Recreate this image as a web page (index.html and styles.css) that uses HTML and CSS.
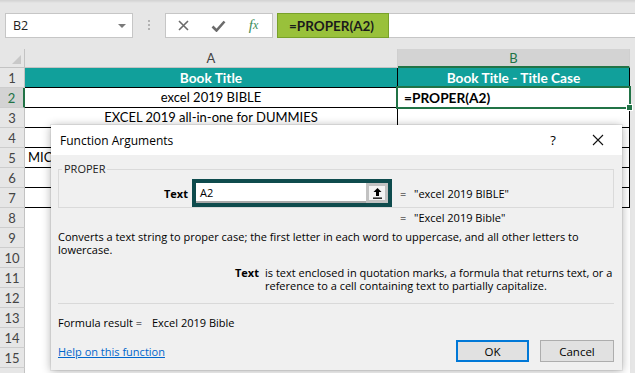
FILE: index.html
```html
<!DOCTYPE html>
<html>
<head>
<meta charset="utf-8">
<link rel="stylesheet" href="styles.css">
</head>
<body>
<div class="toolbar">
  <div class="namebox"><span>B2</span><span class="caret"></span></div>
  <div class="dots"><i></i><i></i><i></i></div>
  <div class="fbtns">
    <span class="fb"><svg width="11" height="11" viewBox="0 0 11 11"><path d="M1 1L10 10M10 1L1 10" stroke="#6b6b6b" stroke-width="1.6" fill="none"/></svg></span>
    <span class="fb"><svg width="15" height="12" viewBox="0 0 15 12"><path d="M1.5 6.5L5.5 10.5L13.5 1.5" stroke="#6b6b6b" stroke-width="2.6" fill="none"/></svg></span>
    <span class="fb fx">f<span class="fxx">x</span></span>
  </div>
  <div class="formula"><div class="fgreen">=PROPER(A2)</div></div>
</div>

<div class="sheet">
  <div class="corner"><span class="tri"></span></div>
  <div class="colh">A</div>
  <div class="colh sel">B</div>

  <div class="rowh">1</div>
  <div class="cell t hdr">Book Title</div>
  <div class="cell t hdr">Book Title - Title Case</div>

  <div class="rowh sel">2</div>
  <div class="cell t c">excel 2019 BIBLE</div>
  <div class="cell t active">=PROPER(A2)</div>

  <div class="rowh">3</div>
  <div class="cell t c">EXCEL 2019 all-in-one for DUMMIES</div>
  <div class="cell t"></div>

  <div class="rowh">4</div>
  <div class="cell t"></div>
  <div class="cell t"></div>

  <div class="rowh">5</div>
  <div class="cell t"><span class="clip">MICROSOFT EXCEL 2019</span></div>
  <div class="cell t"></div>

  <div class="rowh">6</div>
  <div class="cell t"></div>
  <div class="cell t"></div>

  <div class="rowh">7</div>
  <div class="cell t"></div>
  <div class="cell t"></div>

  <div class="rowh">8</div><div class="cell"></div><div class="cell"></div>
  <div class="rowh">9</div><div class="cell"></div><div class="cell"></div>
  <div class="rowh">10</div><div class="cell"></div><div class="cell"></div>
  <div class="rowh">11</div><div class="cell"></div><div class="cell"></div>
  <div class="rowh">12</div><div class="cell"></div><div class="cell"></div>
  <div class="rowh">13</div><div class="cell"></div><div class="cell"></div>
  <div class="rowh">14</div><div class="cell"></div><div class="cell"></div>
  <div class="rowh">15</div><div class="cell"></div><div class="cell"></div>
  <div class="rowh"></div><div class="cell"></div><div class="cell"></div>
</div>

<div class="dialog">
  <div class="dtitle">
    <span class="dname">Function Arguments</span>
    <span class="dq">?</span>
    <span class="dclose"><svg width="12" height="12" viewBox="0 0 12 12"><path d="M1 1L11 11M11 1L1 11" stroke="#111" stroke-width="1.1" fill="none"/></svg></span>
  </div>
  <div class="dbody">
    <fieldset class="group">
      <legend>PROPER</legend>
      <div class="argrow">
        <span class="arglabel">Text</span>
        <div class="refbox">
          <div class="inp">A2</div>
          <div class="refbtn"><svg width="11" height="12" viewBox="0 0 11 12"><path d="M5.5 1L1.5 5H4V9H7V5H9.5Z" fill="#000"/><rect x="1" y="10.5" width="9" height="1.3" fill="#000"/></svg></div>
        </div>
        <span class="eq">=</span>
        <span class="val">"excel 2019 BIBLE"</span>
      </div>
    </fieldset>
    <div class="resrow"><span class="eq">=</span><span class="val">"Excel 2019 Bible"</span></div>
    <div class="desc">Converts a text string to proper case; the first letter in each word to uppercase, and all other letters to<br>lowercase.</div>
    <div class="argdesc">
      <span class="argname">Text</span>
      <span class="argtext">is text enclosed in quotation marks, a formula that returns text, or a<br>reference to a cell containing text to partially capitalize.</span>
    </div>
    <div class="sep"></div>
    <div class="fres">Formula result =<span class="fresval">Excel 2019 Bible</span></div>
    <div class="footer">
      <a class="help" href="#">Help on this function</a>
      <button class="btn ok">OK</button>
      <button class="btn cancel">Cancel</button>
    </div>
  </div>
</div>
</body>
</html>
```

FILE: styles.css
```css
html, body {
  margin: 0;
  padding: 0;
}
body {
  width: 635px;
  height: 373px;
  overflow: hidden;
  background: #e6e6e6;
  font-family: "Open Sans", "Noto Sans", sans-serif;
  position: relative;
}

/* ---------- toolbar ---------- */
.toolbar {
  height: 49px;
  box-sizing: border-box;
  padding-top: 13px;
  display: flex;
  align-items: flex-start;
  background: linear-gradient(#d2d2d2 0, #dedede 2px, #e6e6e6 3px);
}
.namebox {
  margin-left: 5px;
  width: 128px;
  height: 25px;
  box-sizing: border-box;
  border: 1px solid #c6c6c6;
  background: #fff;
  display: flex;
  align-items: center;
  padding-left: 7px;
  font-size: 12.5px;
  color: #222;
}
.caret {
  margin-left: auto;
  margin-right: 6px;
  width: 0;
  height: 0;
  border-left: 4px solid transparent;
  border-right: 4px solid transparent;
  border-top: 4px solid #7a7a7a;
}
.dots {
  width: 32px;
  display: flex;
  flex-direction: column;
  align-items: center;
  gap: 2px;
  padding-top: 7px;
}
.dots i {
  display: block;
  width: 2px;
  height: 2px;
  background: #b2b2b2;
}
.fbtns {
  width: 108px;
  height: 25px;
  box-sizing: border-box;
  border: 1px solid #c6c6c6;
  background: #fff;
  display: flex;
  align-items: center;
}
.fb {
  width: 35px;
  display: flex;
  justify-content: center;
  align-items: center;
}
.fx {
  font-family: "Liberation Serif", serif;
  font-style: italic;
  color: #3c8d5a;
  font-size: 15px;
}
.fxx {
  font-size: 12px;
}
.formula {
  flex: 1;
  margin-left: 4px;
  height: 25px;
  box-sizing: border-box;
  border-top: 1px solid #c6c6c6;
  border-bottom: 1px solid #c6c6c6;
  background: #fff;
  display: flex;
}
.fgreen {
  width: 112px;
  margin: -1px 0;
  box-sizing: border-box;
  background: #99c13b;
  border: 1px solid #78a12a;
  display: flex;
  align-items: center;
  padding-left: 11px;
  font-family: "Lato", sans-serif;
  font-weight: bold;
  font-size: 13.5px;
  color: #1b1b1b;
}

/* ---------- sheet ---------- */
.sheet {
  display: grid;
  grid-template-columns: 25px 373px 232px;
  grid-template-rows: 19px;
  grid-auto-rows: 20px;
  font-family: "Lato", sans-serif;
  font-size: 13px;
}
.corner {
  background: #e6e6e6;
  border-right: 1px solid #c3c3c3;
  border-bottom: 1px solid #c3c3c3;
  box-sizing: border-box;
  position: relative;
}
.tri {
  position: absolute;
  right: 3px;
  bottom: 3px;
  width: 0;
  height: 0;
  border-left: 9px solid transparent;
  border-bottom: 9px solid #c8c8c8;
}
.colh {
  background: #e6e6e6;
  box-sizing: border-box;
  border-right: 1px solid #cfcfcf;
  border-bottom: 1px solid #c3c3c3;
  text-align: center;
  font-size: 13px;
  line-height: 19px;
  color: #444;
}
.colh.sel {
  background: #d3d3d3;
  border-bottom: 2px solid #217346;
  color: #217346;
  line-height: 18px;
}
.rowh {
  background: #e6e6e6;
  box-sizing: border-box;
  border-right: 1px solid #c3c3c3;
  border-bottom: 1px solid #cdcdcd;
  text-align: center;
  font-size: 13px;
  line-height: 20px;
  color: #444;
}
.rowh.sel {
  background: #d3d3d3;
  border-right: 2px solid #217346;
  color: #217346;
}
.cell {
  background: #fff;
  box-sizing: border-box;
  white-space: nowrap;
  overflow: hidden;
  line-height: 19px;
  padding-left: 3px;
  color: #000;
}
.clip {
  display: inline-block;
  width: 23px;
  overflow: hidden;
  vertical-align: top;
}
.cell.t {
  border-right: 1px solid #000;
  border-bottom: 1px solid #000;
}
.cell.c {
  text-align: center;
  padding-left: 0;
}
.cell.hdr {
  background: #11a09b;
  color: #fff;
  font-weight: bold;
  font-size: 13.7px;
  text-align: center;
  padding-left: 0;
}
.cell.active {
  position: relative;
  overflow: visible;
  font-weight: bold;
  font-size: 13.7px;
  padding-left: 6px;
}
.cell.active::after {
  content: "";
  position: absolute;
  left: -2px;
  top: -2px;
  right: -2px;
  bottom: -2px;
  border: 2px solid #217346;
}
.cell.active::before {
  content: "";
  position: absolute;
  right: -4px;
  bottom: -4px;
  width: 5px;
  height: 5px;
  background: #217346;
  border: 1px solid #fff;
  z-index: 1;
}

/* ---------- dialog ---------- */
.dialog {
  position: absolute;
  left: 51px;
  top: 125px;
  width: 571px;
  height: 245px;
  background: #f0f0f0;
  box-shadow: 0 1px 9px rgba(0, 0, 0, 0.32), 0 0 0 1px rgba(0, 0, 0, 0.06);
  font-size: 11px;
  color: #000;
}
.dtitle {
  height: 30px;
  background: #fff;
  display: flex;
  align-items: center;
  padding-left: 9px;
  padding-right: 9px;
  font-size: 12px;
}
.dq {
  margin-left: auto;
  width: 20px;
  text-align: center;
  font-size: 13px;
}
.dclose {
  margin-left: 20px;
  width: 30px;
  display: flex;
  justify-content: center;
}
.dbody {
  padding: 7px 8px 0 7px;
}
.group {
  margin: 0;
  padding: 0 0 0 3px;
  border: 1px solid #dadada;
  min-width: 0;
}
.group legend {
  padding: 0 2px;
  font-size: 11px;
  line-height: 14px;
  color: #222;
}
.argrow {
  display: flex;
  align-items: center;
  height: 28px;
  margin-top: 3px;
}
.arglabel {
  width: 126px;
  text-align: right;
  font-weight: bold;
  margin-right: 4px;
}
.refbox {
  width: 200px;
  height: 28px;
  box-sizing: border-box;
  border: 4px solid #0e4b4d;
  background: #fff;
  display: flex;
}
.inp {
  flex: 1;
  display: flex;
  align-items: center;
  padding-left: 4px;
  border-bottom: 2px solid #a9a9a9;
}
.refbtn {
  width: 22px;
  box-sizing: border-box;
  border: 3px solid #c2c2c2;
  background: #f4f4f4;
  display: flex;
  align-items: center;
  justify-content: center;
}
.eq {
  margin-left: 8px;
  width: 14px;
}
.val {
  white-space: nowrap;
}
.resrow {
  margin-top: 3px;
  line-height: 14px;
  padding-left: 334px;
  display: flex;
}
.desc {
  margin-top: 5px;
  line-height: 13px;
  white-space: nowrap;
}
.argdesc {
  margin-top: 10px;
  padding-left: 177px;
  display: flex;
  line-height: 13px;
  white-space: nowrap;
}
.argname {
  width: 30px;
  font-weight: bold;
}
.sep {
  margin-top: 11px;
  height: 1px;
  background: #d9d9d9;
}
.fres {
  margin-top: 12px;
  line-height: 13px;
}
.fresval {
  margin-left: 10px;
}
.footer {
  margin-top: 11px;
  height: 22px;
  display: flex;
  align-items: center;
}
.help {
  color: #0066cc;
  text-decoration: underline;
}
.btn {
  font-family: inherit;
  font-size: 11.5px;
  height: 22px;
  box-sizing: border-box;
  background: #e1e1e1;
  color: #000;
  padding: 0;
}
.ok {
  margin-left: auto;
  width: 73px;
  border: 2px solid #0078d7;
}
.cancel {
  margin-left: 11px;
  width: 74px;
  border: 1px solid #adadad;
}
```
